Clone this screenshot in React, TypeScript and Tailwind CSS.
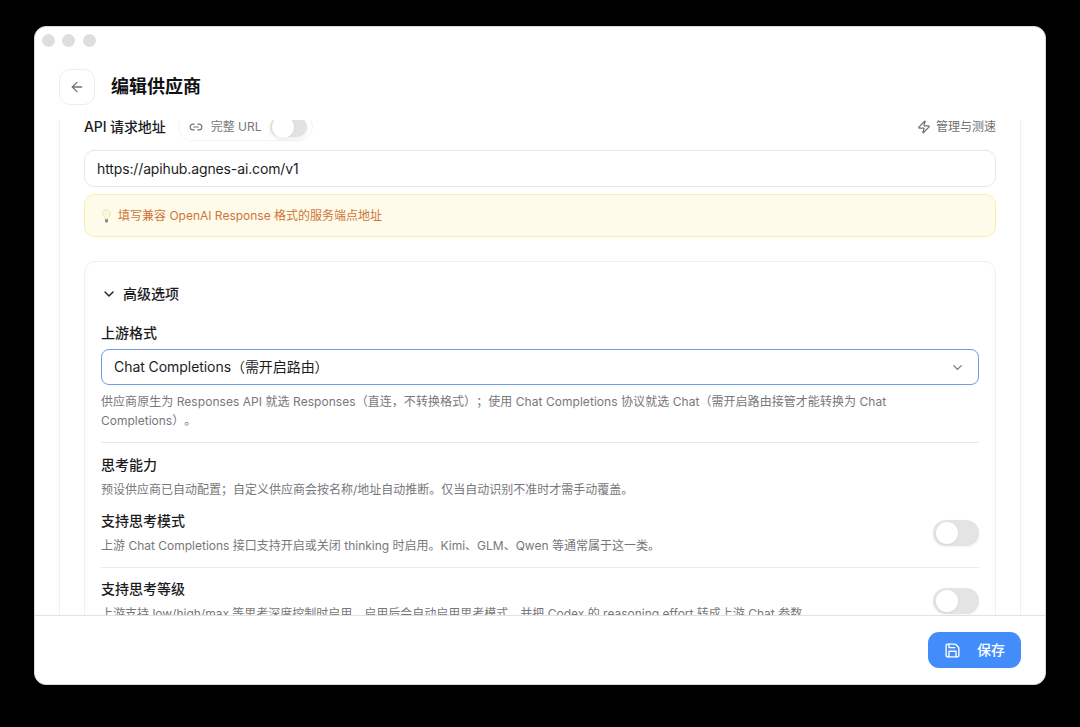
import React from "react";
import { ArrowLeft, ChevronDown, Link2, Save, Zap } from "lucide-react";

function Toggle({ small = false }: { small?: boolean }) {
  return (
    <span
      role="switch"
      aria-checked="false"
      className={
        small
          ? "flex h-5 w-[37px] shrink-0 items-center rounded-full bg-[#e2e2e2] shadow-[0_2px_5px_rgba(0,0,0,0.07)]"
          : "flex h-[26px] w-[46px] shrink-0 items-center rounded-full bg-[#e4e4e4] px-[3px] shadow-[0_1px_3px_rgba(0,0,0,0.06)]"
      }
    >
      <span
        className={
          small
            ? "ml-0.5 size-[22px] shrink-0 rounded-full bg-white shadow-[0_1px_3px_rgba(0,0,0,0.06)]"
            : "size-[22px] rounded-full bg-white shadow-[0_1px_3px_rgba(0,0,0,0.06)]"
        }
      />
    </span>
  );
}

function Bulb() {
  return (
    <svg width="11" height="14" viewBox="0 0 11 14" fill="none">
      <path d="M5.5 .8a4 4 0 0 0-2.3 7.3c.6.5.8 1 .8 1.6h3c0-.6.2-1.1.8-1.6A4 4 0 0 0 5.500.8Z" fill="#fdf8d4" stroke="#e3dfc8" strokeWidth=".8" />
      <path d="M4 10.300h3v2.200l-.8.9H4.800l-.8-.9Z" fill="#8c8a82" />
    </svg>
  );
}

function Setting({ title, text }: { title: string; text: string }) {
  return (
    <div className="flex h-[44px] items-start justify-between">
      <div>
        <h3 className="h-[22px] text-sm leading-5 font-medium text-[#1c1c1e]">{title}</h3>
        <p className="mt-[3px] text-xs leading-[19px] whitespace-nowrap text-[#77777b]">{text}</p>
      </div>
      <div className="mt-[9px]">
        <Toggle />
      </div>
    </div>
  );
}

export default function App() {
  return (
    <div className="h-[727px] w-[1080px] overflow-hidden bg-black pt-[26px] pl-[34px] font-['Inter','Noto_Sans_CJK_SC',sans-serif] text-[#1c1c1e] [text-spacing-trim:space-all]">
      <main className="flex h-[659px] w-[1012px] flex-col overflow-hidden rounded-[12px] border border-[#d8d8d8] bg-white">
        <header className="h-[93px] shrink-0">
          <div className="flex gap-[7.5px] pt-[7px] pl-[6.5px]">
            <span className="size-[13px] rounded-full bg-[#dedede]" />
            <span className="size-[13px] rounded-full bg-[#dedede]" />
            <span className="size-[13px] rounded-full bg-[#dedede]" />
          </div>
          <div className="mt-[22px] flex items-center gap-4 pl-6">
            <button className="flex size-[36px] items-center justify-center rounded-[11px] border border-[#ededed]">
              <ArrowLeft size={16} strokeWidth={1.9} color="#707073" />
            </button>
            <h1 className="text-lg leading-7 font-semibold text-[#111113]">编辑供应商</h1>
          </div>
        </header>

        <section className="min-h-0 flex-1 overflow-hidden px-6">
          <div className="h-[600px] border-x border-[#f0f0f0] px-6">
            <div className="-mt-[8px] flex h-7 items-center pt-px">
              <span className="text-sm font-medium tracking-[-0.1px]">API 请求地址</span>
              <div className="ml-3 flex h-7 w-[135px] items-center rounded-full border border-[#f3f3f3] pl-[10px] text-xs text-[#77777b]">
                <Link2 size={14} strokeWidth={2} />
                <span className="mr-[9px] ml-2">完整 URL</span>
                <Toggle small />
              </div>
              <div className="ml-auto flex items-center gap-[5px] text-xs text-[#707073]">
                <Zap size={14} strokeWidth={2} />
                管理与测速
              </div>
            </div>

            <div className="mt-[10px] flex h-[37px] items-center rounded-[10px] border border-[#e7e7e7] px-3 text-sm tracking-[-0.13px]">
              https://apihub.agnes-ai.com/v1
            </div>
            <div className="mt-[7px] flex h-[43px] items-center gap-[6px] rounded-[10px] border border-[#f9efad] bg-[#fffbeb] pl-4 text-xs text-[#ce7536]">
              <Bulb />
              填写兼容 OpenAI Response 格式的服务端点地址
            </div>

            <div className="mt-6 h-[500px] rounded-[12px] border border-[#f0f0f0] px-4">
              <div className="mt-[22px] flex h-5 items-center gap-[6px] text-sm font-medium">
                <ChevronDown size={16} strokeWidth={2} />
                高级选项
              </div>
              <div className="mt-[19px] h-5 text-sm leading-5 font-medium">上游格式</div>
              <div className="mt-[6px] flex h-[36px] items-center justify-between rounded-[8px] border border-[#6b9fe6] pr-[13px] pl-3 text-sm">
                <span className="tracking-[-0.06px]">Chat Completions（需开启路由）</span>
                <ChevronDown size={15} strokeWidth={2} color="#77777b" />
              </div>
              <p className="mt-[7px] text-xs leading-[19px] text-[#77777b]">
                <span className="tracking-[0.05px]">供应商原生为 Responses API 就选 Responses（直连，不转换格式）；使用 Chat Completions 协议就选 Chat（需开启路由接管才能转换为 Chat</span>
                <br />
                Completions）。
              </p>
              <div className="mt-[12px] h-px bg-[#e9e9e9]" />
              <div className="mt-[12px] h-[44px]">
                <h3 className="h-[22px] text-sm leading-5 font-medium">思考能力</h3>
                <p className="mt-[3px] text-xs leading-[19px] text-[#77777b]">
                  预设供应商已自动配置；自定义供应商会按名称/地址自动推断。仅当自动识别不准时才需手动覆盖。
                </p>
              </div>
              <div className="mt-3">
                <Setting title="支持思考模式" text="上游 Chat Completions 接口支持开启或关闭 thinking 时启用。Kimi、GLM、Qwen 等通常属于这一类。" />
              </div>
              <div className="mt-[12px] h-px bg-[#ebebeb]" />
              <div className="mt-[11px]">
                <Setting title="支持思考等级" text="上游支持 low/high/max 等思考深度控制时启用。启用后会自动启用思考模式，并把 Codex 的 reasoning effort 转成上游 Chat 参数。" />
              </div>
            </div>
          </div>
        </section>

        <footer className="flex h-[69px] shrink-0 items-center justify-end border-t border-[#e2e2e2] pr-6">
          <button className="flex h-[36px] w-[93px] items-center gap-4 rounded-[11px] bg-[#438dfb] pl-4 text-sm font-medium text-white">
            <Save size={17} strokeWidth={1.9} />
            保存
          </button>
        </footer>
      </main>
    </div>
  );
}
